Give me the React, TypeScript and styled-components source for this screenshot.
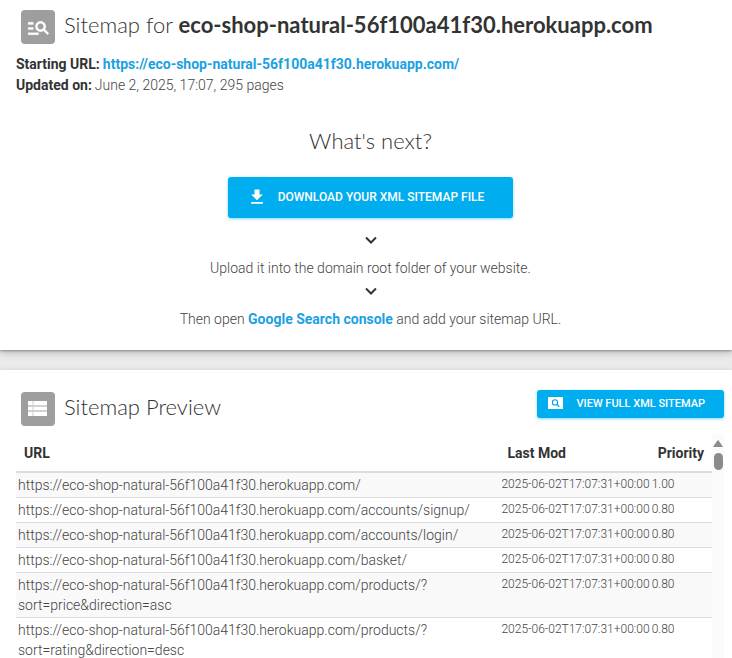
import React from "react";
import styled, { createGlobalStyle, css } from "styled-components";
import { MdFileDownload } from "react-icons/md";

const GlobalStyle = createGlobalStyle`
  *, *::before, *::after { box-sizing: border-box; }
  body {
    margin: 0;
    background: #ebebeb;
    color: #444444;
    font-family: Roboto, "Liberation Sans", sans-serif;
    font-size: 14px;
    font-weight: 300;
    line-height: 20px;
  }
`;

const Page = styled.main`
  display: flex;
  flex-direction: column;
  gap: 20px;
  height: 100vh;
  overflow: hidden;
`;

const Card = styled.section<{ $fill?: boolean }>`
  display: flex;
  flex-direction: column;
  flex: none;
  background: #ffffff;
  box-shadow: 0 2px 8px rgba(0, 0, 0, 0.25), 0 1px 2px rgba(0, 0, 0, 0.3);
  padding: 8px 16px 21px;
  ${(p) =>
    p.$fill &&
    css`
      flex: 1;
      min-height: 0;
      padding: 20px 8px 0 16px;
      box-shadow: 0 0 4px rgba(0, 0, 0, 0.12);
    `}
`;

const CardHeader = styled.header`
  display: flex;
  align-items: flex-start;
  gap: 9px;
  padding-left: 5px;
`;

const IconTile = styled.span`
  display: flex;
  align-items: center;
  justify-content: center;
  flex: none;
  width: 34px;
  height: 34px;
  margin-top: 2px;
  border-radius: 4px;
  background: #9e9e9e;
  color: #ffffff;
`;

const Title = styled.h2`
  flex: 1;
  margin: 0;
  font-family: Lato, "Liberation Sans", sans-serif;
  font-size: 22px;
  font-weight: 300;
  line-height: 34px;
  color: #333333;
  strong {
    font-weight: 700;
  }
`;

const Facts = styled.dl`
  margin: 10px 0 0;
  line-height: 21px;
`;

const Fact = styled.div`
  display: flex;
  gap: 3px;
  dt {
    font-weight: 700;
    color: #333333;
  }
  dd {
    margin: 0;
  }
`;

const Link = styled.a`
  color: #1ba1e2;
  font-weight: 700;
  text-decoration: none;
`;

const Steps = styled.div`
  display: flex;
  flex-direction: column;
  align-items: center;
  padding: 28px 0 0 9px;
  p {
    margin: 0;
  }
`;

const StepsTitle = styled(Title)`
  margin-bottom: 19px;
`;

const Button = styled.button<{ $small?: boolean }>`
  display: flex;
  align-items: center;
  flex: none;
  border: 0;
  border-radius: 3px;
  background: #00adef;
  color: #ffffff;
  font-family: inherit;
  font-weight: 500;
  text-transform: uppercase;
  cursor: pointer;
  box-shadow: 0 1px 3px rgba(0, 173, 239, 0.5);
  gap: ${(p) => (p.$small ? "13px" : "11px")};
  height: ${(p) => (p.$small ? "28px" : "41px")};
  padding: ${(p) => (p.$small ? "0 19px 2px 11px" : "0 29px 2px 19px")};
  font-size: ${(p) => (p.$small ? "11px" : "12px")};
`;

const ArrowSlot = styled.span`
  display: flex;
  align-items: flex-start;
  justify-content: center;
  height: 31px;
  padding-top: 8px;
  &:first-of-type {
    height: 40px;
    padding-top: 17px;
  }
`;

const Scroller = styled.div`
  display: flex;
  flex: 1;
  min-height: 0;
  overflow: hidden;
  margin-top: 8px;
`;

const Table = styled.table`
  flex: 1;
  align-self: flex-start;
  border-collapse: collapse;
  th {
    height: 38px;
    padding: 0 8px;
    border-bottom: 2px solid #dddddd;
    color: #333333;
    font-size: 14px;
    font-weight: 700;
    text-align: left;
  }
  th:first-child {
    width: 100%;
  }
  td {
    padding: 2px;
    border-bottom: 1px solid #dddddd;
    vertical-align: top;
  }
  tbody tr:nth-child(odd) {
    background: #f9f9f9;
  }
`;

const SmallCell = styled.td`
  && {
    padding-right: 0;
  }
  font-size: 12px;
  line-height: 18px;
  white-space: nowrap;
`;

const Gutter = styled.div`
  display: flex;
  flex-direction: column;
  align-items: center;
  flex: none;
  gap: 6px;
  width: 12px;
  padding-top: 6px;
  background: #fbfbfb;
`;

const Thumb = styled.span`
  width: 9px;
  height: 17px;
  border-radius: 5px;
  background: #8b8b8b;
`;

const DownArrow = () => (
  <svg width="14" height="10" viewBox="0 0 14 10" aria-hidden="true">
    <path d="M2 2.5 7 7.5l5-5" fill="none" stroke="#333333" strokeWidth="2" />
  </svg>
);

const ManageSearchIcon = () => (
  <svg width="25" height="25" viewBox="0 0 24 24" aria-hidden="true">
    <path
      d="M7 9H2V7h5v2zm0 3H2v2h5v-2zm13.59 7-3.83-3.83c-.8.52-1.74.83-2.76.83-2.76 0-5-2.24-5-5s2.24-5 5-5 5 2.24 5 5c0 1.02-.31 1.96-.83 2.75L22 17.59 20.59 19zM17 11c0-1.65-1.35-3-3-3s-3 1.35-3 3 1.35 3 3 3 3-1.35 3-3zM2 19h10v-2H2v2z"
      fill="currentColor"
      stroke="currentColor"
      strokeWidth="0.3"
    />
  </svg>
);

const ListIcon = () => (
  <svg width="20" height="16" viewBox="0 0 20 16" aria-hidden="true">
    <path d="M0 0h19v15H0z" fill="#ffffff" />
    <path d="M0 5h19M0 10h19" stroke="#a4a4a4" strokeWidth="1" />
    <path d="M5 0v15" stroke="#c4d2d6" strokeWidth="1" />
  </svg>
);

const PageviewIcon = () => (
  <svg width="15" height="12" viewBox="0 0 15 12" aria-hidden="true">
    <path d="M0 0h15v12H0z" fill="#ffffff" />
    <circle cx="7" cy="5.4" r="2.6" fill="none" stroke="#00a2e0" strokeWidth="1.1" />
    <path d="m9 7.4 2.3 2.3" stroke="#00a2e0" strokeWidth="1.3" />
  </svg>
);

const SITE = "https://eco-shop-natural-56f100a41f30.herokuapp.com/";
const STAMP = "2025-06-02T17:07:31+00:00";

const rows = [
  { path: "", priority: "1.00" },
  { path: "accounts/signup/", priority: "0.80" },
  { path: "accounts/login/", priority: "0.80" },
  { path: "basket/", priority: "0.80" },
  { path: "products/?sort=price&direction=asc", priority: "0.80" },
  { path: "products/?sort=rating&direction=desc", priority: "0.80" },
];

export default function App() {
  return (
    <>
      <GlobalStyle />
      <Page>
        <Card>
          <CardHeader>
            <IconTile>
              <ManageSearchIcon />
            </IconTile>
            <Title>
              Sitemap for <strong>eco-shop-natural-56f100a41f30.herokuapp.com</strong>
            </Title>
          </CardHeader>
          <Facts>
            <Fact>
              <dt>Starting URL:</dt>
              <dd>
                <Link href={SITE}>{SITE}</Link>
              </dd>
            </Fact>
            <Fact>
              <dt>Updated on:</dt>
              <dd>June 2, 2025, 17:07, 295 pages</dd>
            </Fact>
          </Facts>
          <Steps>
            <StepsTitle>What's next?</StepsTitle>
            <Button type="button">
              <MdFileDownload size={20} />
              Download your XML sitemap file
            </Button>
            <ArrowSlot>
              <DownArrow />
            </ArrowSlot>
            <p>Upload it into the domain root folder of your website.</p>
            <ArrowSlot>
              <DownArrow />
            </ArrowSlot>
            <p>
              Then open <Link href="#search-console">Google Search console</Link> and add your
              sitemap URL.
            </p>
          </Steps>
        </Card>
        <Card $fill>
          <CardHeader>
            <IconTile>
              <ListIcon />
            </IconTile>
            <Title>Sitemap Preview</Title>
            <Button type="button" $small>
              <PageviewIcon />
              View full XML sitemap
            </Button>
          </CardHeader>
          <Scroller>
            <Table>
              <thead>
                <tr>
                  <th scope="col">URL</th>
                  <th scope="col">Last Mod</th>
                  <th scope="col">Priority</th>
                </tr>
              </thead>
              <tbody>
                {rows.map((row) => (
                  <tr key={row.path}>
                    <td>{SITE + row.path}</td>
                    <SmallCell>{STAMP}</SmallCell>
                    <SmallCell>{row.priority}</SmallCell>
                  </tr>
                ))}
              </tbody>
            </Table>
            <Gutter>
              <svg width="10" height="7" viewBox="0 0 10 7" aria-hidden="true">
                <path d="M5 .5 9.3 6.5H.7z" fill="#8b8b8b" stroke="#8b8b8b" strokeLinejoin="round" />
              </svg>
              <Thumb />
            </Gutter>
          </Scroller>
        </Card>
      </Page>
    </>
  );
}
